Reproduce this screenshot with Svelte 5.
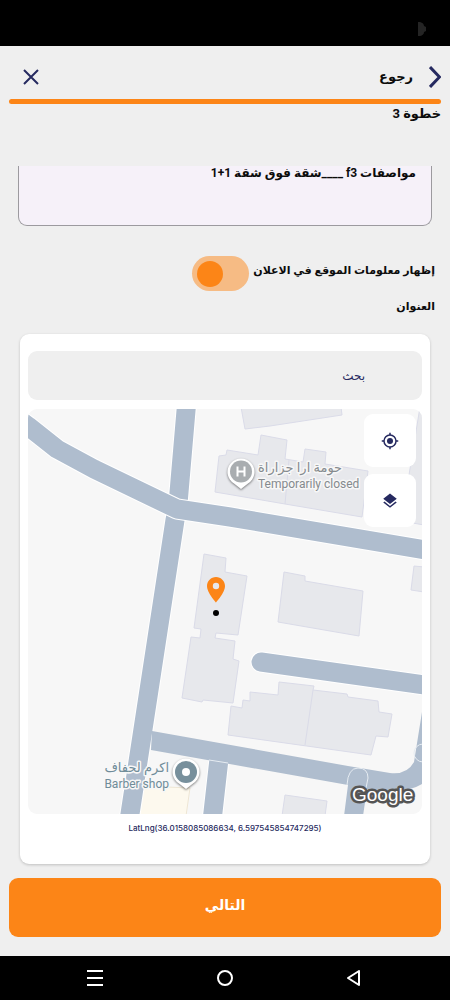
<!--
  Paso 3 del formulario de anuncio: descripción, ubicación y mapa.
-->
<script>
  let descripcion = $state('مواصفات f3 ____شقة فوق شقة 1+1');
  let mostrarUbicacion = $state(true);
  let busqueda = $state('');

  const coordenadas = { lat: '36.0158085086634', lng: '6.597545854747295' };

  /** Calles: cada una es la línea central de la calzada. */
  const calles = [
    'M159 -10 L150 95 L147 111 L121 281 L100 418',
    'M-16 5 L0 17 L29 40 L66 60 L149 100 L202 108 L404 142',
    'M233 253 L404 277',
    'M191 350 L184 412',
  ];

  /** Contornos de los edificios. */
  const edificios = [
    '213,-2 217,20 242,17 314,6 313,-2',
    '187,83 191,47 198,46 199,41 230,46 233,26 259,31 257,50 275,53 277,40 298,43 297,55 340,62 334,108 257,95',
    '392,-2 381,66 379,113 396,116 396,-2',
    '176,145 198,149 197,163 219,167 210,226 188,224 187,229 207,232 205,250 211,252 205,294 175,291 174,293 154,289 163,228 172,229 173,220 166,219',
    '256,163 277,167 277,172 335,182 331,227 250,213',
    '386,157 383,181 396,183 396,158',
    '222,283 250,286 251,273 286,277 285,281 319,285 320,288 350,292 351,303 364,305 360,328 348,327 343,346 200,326 203,297 214,299 215,291 222,292',
    '257,386 299,392 297,407 254,407',
  ];
</script>

<div class="pantalla" dir="rtl">
  <div class="estado">
    <svg width="8" height="14" viewBox="0 0 8 14" aria-hidden="true">
      <path d="M0 0h2q4 1 4 4l2 1v4l-2 1q0 3-4 4H0z" fill="#242424" />
    </svg>
  </div>

  <header class="cabecera">
    <button class="volver">
      <svg width="12" height="22" viewBox="0 0 12 22" aria-hidden="true">
        <path d="M1 1l9.500 10L1 21" fill="none" stroke="#262a60" stroke-width="3" />
      </svg>
      رجوع
    </button>
    <button class="cerrar" aria-label="إغلاق">
      <svg width="16" height="16" viewBox="0 0 16 16" aria-hidden="true">
        <path d="M1 1l14 14M15 1L1 15" stroke="#262a60" stroke-width="2" />
      </svg>
    </button>
  </header>

  <div class="progreso" role="progressbar" aria-label="خطوة 3" aria-valuenow="100"></div>
  <h1 class="paso">خطوة 3</h1>

  <main class="contenido">
    <textarea class="descripcion" aria-label="مواصفات" bind:value={descripcion}></textarea>

    <label class="opcion">
      إظهار معلومات الموقع في الاعلان
      <input class="interruptor" type="checkbox" role="switch" bind:checked={mostrarUbicacion} />
    </label>

    <h2 class="titulo">العنوان</h2>

    <section class="tarjeta">
      <input class="busqueda" type="text" placeholder="بحث" aria-label="بحث" bind:value={busqueda} />

      <div class="mapa">
        <svg class="plano" viewBox="0 0 394 405" preserveAspectRatio="xMidYMid slice" direction="ltr">
          <polygon class="comercio" points="115,377 162,379 158,407 111,407" />

          {#each edificios as puntos}
            <polygon class="edificio" points={puntos} />
          {/each}
          <path class="edificio" d="M261 51L257 95M285 281L277 336" />

          {#each calles as d}
            <path class="borde" {d} />
            <path class="calle" {d} />
          {/each}
          <path
            class="avenida"
            d="M124 322L320 357L362 364Q379 366 386 353L394 303V375Q380 384 352 382L339 380L335 407H316L320 376L123 341z"
          />
          <path class="arco" d="M319 376Q320 359 330 359T340 369L338 379M181 351L200 354" />
          <circle class="arco" cx="395" cy="344" r="9" />

          <!-- Lugares -->
          <g class="sombra">
            <path d="M213 80L206 74.500A13.500 13.500 0 1 1 220 74.500z" fill="#fff" />
            <path d="M158 380L151 374.500A13.500 13.500 0 1 1 165 374.500z" fill="#fff" />
          </g>
          <circle cx="213" cy="62.500" r="11" fill="#a9adb0" />
          <path d="M209.500 57.500v10M216.500 57.500v10M209.500 62.500h7" stroke="#fff" stroke-width="2" />
          <circle cx="158" cy="363" r="11" fill="#78909c" />
          <circle cx="158" cy="363" r="4" fill="#fff" />

          <text class="lugar lugar--arabe" x="230" y="63">حومة ارا جزاراة</text>
          <text class="lugar" x="230" y="79">Temporarily closed</text>
          <text class="lugar lugar--arabe lugar--tienda" x="141" y="363">اكرم لحفاف</text>
          <text class="lugar lugar--tienda" x="141" y="379">Barber shop</text>

          <!-- Posición elegida -->
          <path
            d="M188 168C183 168 179 172 179 177C179 183.700 188 193.500 188 193.500S197 183.700 197 177C197 172 193 168 188 168zM188 180.200A3.200 3.200 0 1 1 188 173.800A3.200 3.200 0 1 1 188 180.200z"
            fill="#fc8517"
          />
          <circle cx="188" cy="204" r="3" />

          <text class="marca" x="324" y="392">Google</text>
        </svg>

        <div class="controles">
          <button class="control" aria-label="موقعي">
            <svg width="18" height="18" viewBox="0 0 24 24" aria-hidden="true">
              <circle cx="12" cy="12" r="4" fill="#262a60" />
              <circle cx="12" cy="12" r="8" fill="none" stroke="#262a60" stroke-width="2" />
              <path d="M12 1v3M12 20v3M1 12h3M20 12h3" stroke="#262a60" stroke-width="2" />
            </svg>
          </button>
          <button class="control" aria-label="طبقات">
            <svg width="18" height="18" viewBox="0 0 24 24" fill="#262a60" aria-hidden="true">
              <path d="M11.990 18.540l-7.370-5.730L3 14.070l9 7 9-7-1.630-1.270-7.380 5.740zM12 16l7.360-5.730L21 9l-9-7-9 7 1.630 1.270L12 16z" />
            </svg>
          </button>
        </div>
      </div>

      <p class="coordenadas" dir="ltr">LatLng({coordenadas.lat}, {coordenadas.lng})</p>
    </section>
  </main>

  <button class="siguiente">التالي</button>

  <nav class="sistema" dir="ltr">
    <button aria-label="التطبيقات">
      <svg width="16" height="16" viewBox="0 0 16 16" aria-hidden="true">
        <path d="M0 1h16M0 8h16M0 15h16" stroke="#fff" stroke-width="2" />
      </svg>
    </button>
    <button aria-label="الرئيسية">
      <svg width="16" height="16" viewBox="0 0 16 16" aria-hidden="true">
        <circle cx="8" cy="8" r="7" fill="none" stroke="#fff" stroke-width="2" />
      </svg>
    </button>
    <button aria-label="السابق">
      <svg width="16" height="16" viewBox="0 0 16 16" aria-hidden="true">
        <path d="M12 1v14L1 8z" fill="none" stroke="#fff" stroke-width="2" stroke-linejoin="round" />
      </svg>
    </button>
  </nav>
</div>

<style>
  :global(body) {
    margin: 0;
    background: #efefef;
  }

  .pantalla {
    display: flex;
    flex-direction: column;
    min-height: 100vh;
    background: #efefef;
    color: #0c0c0c;
    font-family: Roboto, "DejaVu Sans", sans-serif;
    font-size: 12px;
    line-height: 20px;
  }

  button {
    background: none;
    border: none;
    padding: 0;
    color: inherit;
    font: inherit;
    cursor: pointer;
  }

  svg {
    display: block;
  }

  .estado {
    display: flex;
    align-items: center;
    height: 46px;
    box-sizing: border-box;
    padding: 12px 24px 0;
    background: #000;
  }

  .cabecera {
    display: flex;
    align-items: center;
    justify-content: space-between;
    height: 53px;
    box-sizing: border-box;
    padding: 8px 9px 0;
  }

  .volver {
    display: flex;
    align-items: center;
    gap: 16px;
    font-size: 13px;
    font-weight: 700;
  }

  .cerrar {
    padding: 0 14px;
  }

  .progreso {
    height: 5px;
    margin: 0 9px;
    border-radius: 3px;
    background: #fc8517;
  }

  .paso {
    margin: 0 9px 42px;
    font-size: 13px;
    font-weight: 700;
    line-height: 20px;
  }

  .contenido {
    display: flex;
    flex-direction: column;
    padding: 0 20px;
  }

  .descripcion {
    height: 60px;
    box-sizing: border-box;
    margin: 0 -2px;
    padding: 0 15px;
    border: 1px solid #9c9a9f;
    border-top: none;
    border-radius: 0 0 9px 9px;
    background: #f6f1f9;
    color: inherit;
    font: inherit;
    font-weight: 700;
    line-height: 14px;
    resize: none;
    overflow: hidden;
  }

  .opcion {
    display: flex;
    align-items: flex-start;
    gap: 4px;
    margin-top: 30px;
    margin-right: -5px;
    font-size: 11px;
    font-weight: 700;
    line-height: 30px;
  }

  .interruptor {
    appearance: none;
    display: flex;
    align-items: center;
    width: 57px;
    height: 35px;
    box-sizing: border-box;
    margin: 0;
    padding: 0 5px;
    border-radius: 18px;
    background: #f6bb84;
    cursor: pointer;
  }

  .interruptor::before {
    content: "";
    width: 26px;
    height: 26px;
    border-radius: 50%;
    background: #fc8517;
  }

  .interruptor:checked {
    justify-content: flex-end;
  }

  .titulo {
    margin: 6px -5px 17px;
    font-size: 11px;
    font-weight: 700;
    line-height: 20px;
  }

  .tarjeta {
    display: flex;
    flex-direction: column;
    padding: 17px 8px 30px;
    border-radius: 9px;
    background: #fff;
    box-shadow: 0 1px 3px rgba(0, 0, 0, 0.2);
  }

  .busqueda {
    height: 49px;
    box-sizing: border-box;
    padding: 0 57px;
    border: none;
    border-radius: 9px;
    background: #efefef;
    color: #262a60;
    font: inherit;
  }

  .busqueda::placeholder {
    color: #262a60;
    opacity: 1;
  }

  .mapa {
    position: relative;
    height: 405px;
    margin-top: 9px;
    border-radius: 9px;
    overflow: hidden;
    background: #f7f7f7;
  }

  .plano {
    width: 100%;
    height: 100%;
  }

  .edificio {
    fill: #e7e8ec;
    stroke: #dadbe8;
  }

  .comercio {
    fill: #fdf9ee;
    stroke: #eee6d4;
  }

  .borde,
  .calle {
    fill: none;
    stroke: #fff;
    stroke-width: 21px;
    stroke-linecap: round;
    stroke-linejoin: round;
  }

  .calle {
    stroke: #afbdce;
    stroke-width: 19px;
  }

  .avenida {
    fill: #afbdce;
  }

  .arco {
    fill: none;
    stroke: #e6ecf2;
  }

  .sombra {
    filter: drop-shadow(0 1px 1px rgba(0, 0, 0, 0.5));
  }

  .lugar {
    direction: ltr;
    fill: #858a8e;
    stroke: #f7f7f7;
    stroke-width: 3px;
    stroke-linejoin: round;
    paint-order: stroke;
    font-size: 12px;
  }

  .lugar--arabe {
    font-size: 13px;
  }

  .lugar--tienda {
    fill: #6f8c99;
    text-anchor: end;
  }

  .marca {
    direction: ltr;
    fill: #fff;
    stroke: #555;
    stroke-width: 5px;
    stroke-linejoin: round;
    paint-order: stroke;
    font-family: "Liberation Sans", sans-serif;
    font-size: 19px;
  }

  .controles {
    position: absolute;
    top: 5px;
    right: 6px;
    display: flex;
    flex-direction: column;
    gap: 7px;
  }

  .control {
    display: grid;
    place-items: center;
    width: 52px;
    height: 53px;
    border-radius: 9px;
    background: #fff;
  }

  .coordenadas {
    margin: 8px 0 0;
    color: #262a60;
    font-family: Inter, sans-serif;
    font-size: 8px;
    font-weight: 500;
    line-height: 12px;
    text-align: center;
  }

  .siguiente {
    height: 59px;
    margin: 14px 9px 19px;
    padding-bottom: 6px;
    border-radius: 9px;
    background: #fc8517;
    color: #fff;
    font-size: 14px;
    font-weight: 700;
  }

  .sistema {
    display: grid;
    grid-template-columns: repeat(3, 1fr);
    height: 44px;
    margin-top: auto;
    padding: 0 30px;
    background: #000;
  }

  .sistema button {
    display: grid;
    place-items: center;
  }
</style>
